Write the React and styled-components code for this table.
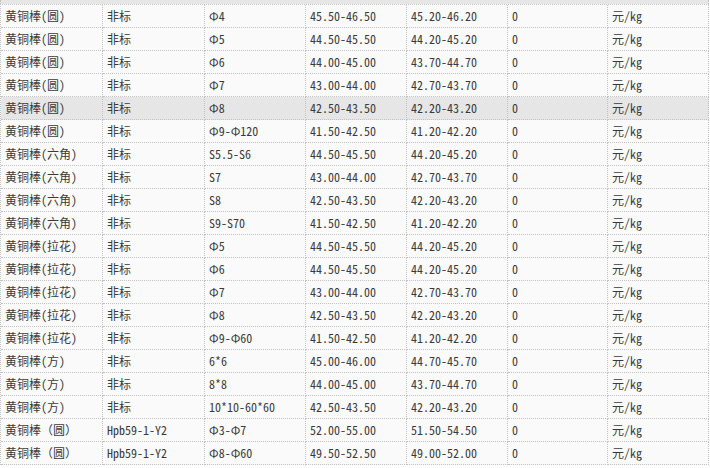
import React from 'react';
import styled, { createGlobalStyle } from 'styled-components';

const GlobalStyle = createGlobalStyle`
  body {
    margin: 0;
    background: #ffffff;
    font-family: "Noto Sans Mono CJK SC", "Liberation Mono", "Noto Sans CJK SC", monospace;
  }
`;

const TableWrapper = styled.div`
  width: 709px;
`;

const TopStrip = styled.div`
  height: 4px;
  background: #e6e6e6;
  border-left: 1px dotted #c2c2c2;
  border-right: 1px dotted #c2c2c2;
  box-sizing: border-box;
`;

const Grid = styled.div`
  display: grid;
  grid-template-columns: 102px 102px 101px 101px 101px 100px 101px;
  border-left: 1px dotted #c2c2c2;
  border-top: 1px dotted #c2c2c2;
`;

const Cell = styled.div`
  height: 22px;
  line-height: 22px;
  padding-left: 4px;
  border-right: 1px dotted #c2c2c2;
  border-bottom: 1px dotted #c2c2c2;
  background: ${props => (props.active ? '#e6e6e6' : '#fafafa')};
  color: #3a3a3a;
  font-size: 12px;
  white-space: nowrap;
  overflow: hidden;
`;

const rows = [
  ['黄铜棒(圆)', '非标', 'Φ4', '45.50-46.50', '45.20-46.20'],
  ['黄铜棒(圆)', '非标', 'Φ5', '44.50-45.50', '44.20-45.20'],
  ['黄铜棒(圆)', '非标', 'Φ6', '44.00-45.00', '43.70-44.70'],
  ['黄铜棒(圆)', '非标', 'Φ7', '43.00-44.00', '42.70-43.70'],
  ['黄铜棒(圆)', '非标', 'Φ8', '42.50-43.50', '42.20-43.20'],
  ['黄铜棒(圆)', '非标', 'Φ9-Φ120', '41.50-42.50', '41.20-42.20'],
  ['黄铜棒(六角)', '非标', 'S5.5-S6', '44.50-45.50', '44.20-45.20'],
  ['黄铜棒(六角)', '非标', 'S7', '43.00-44.00', '42.70-43.70'],
  ['黄铜棒(六角)', '非标', 'S8', '42.50-43.50', '42.20-43.20'],
  ['黄铜棒(六角)', '非标', 'S9-S70', '41.50-42.50', '41.20-42.20'],
  ['黄铜棒(拉花)', '非标', 'Φ5', '44.50-45.50', '44.20-45.20'],
  ['黄铜棒(拉花)', '非标', 'Φ6', '44.50-45.50', '44.20-45.20'],
  ['黄铜棒(拉花)', '非标', 'Φ7', '43.00-44.00', '42.70-43.70'],
  ['黄铜棒(拉花)', '非标', 'Φ8', '42.50-43.50', '42.20-43.20'],
  ['黄铜棒(拉花)', '非标', 'Φ9-Φ60', '41.50-42.50', '41.20-42.20'],
  ['黄铜棒(方)', '非标', '6*6', '45.00-46.00', '44.70-45.70'],
  ['黄铜棒(方)', '非标', '8*8', '44.00-45.00', '43.70-44.70'],
  ['黄铜棒(方)', '非标', '10*10-60*60', '42.50-43.50', '42.20-43.20'],
  ['黄铜棒（圆）', 'Hpb59-1-Y2', 'Φ3-Φ7', '52.00-55.00', '51.50-54.50'],
  ['黄铜棒（圆）', 'Hpb59-1-Y2', 'Φ8-Φ60', '49.50-52.50', '49.00-52.00'],
];

const App = () => {
  return (
    <TableWrapper>
      <GlobalStyle />
      <TopStrip />
      <Grid>
        {rows.map((row, i) => {
          const active = i === 4;
          return [...row, '0', '元/kg'].map((text, j) => (
            <Cell key={`${i}-${j}`} active={active}>
              {text}
            </Cell>
          ));
        })}
      </Grid>
    </TableWrapper>
  );
};

export default App;
